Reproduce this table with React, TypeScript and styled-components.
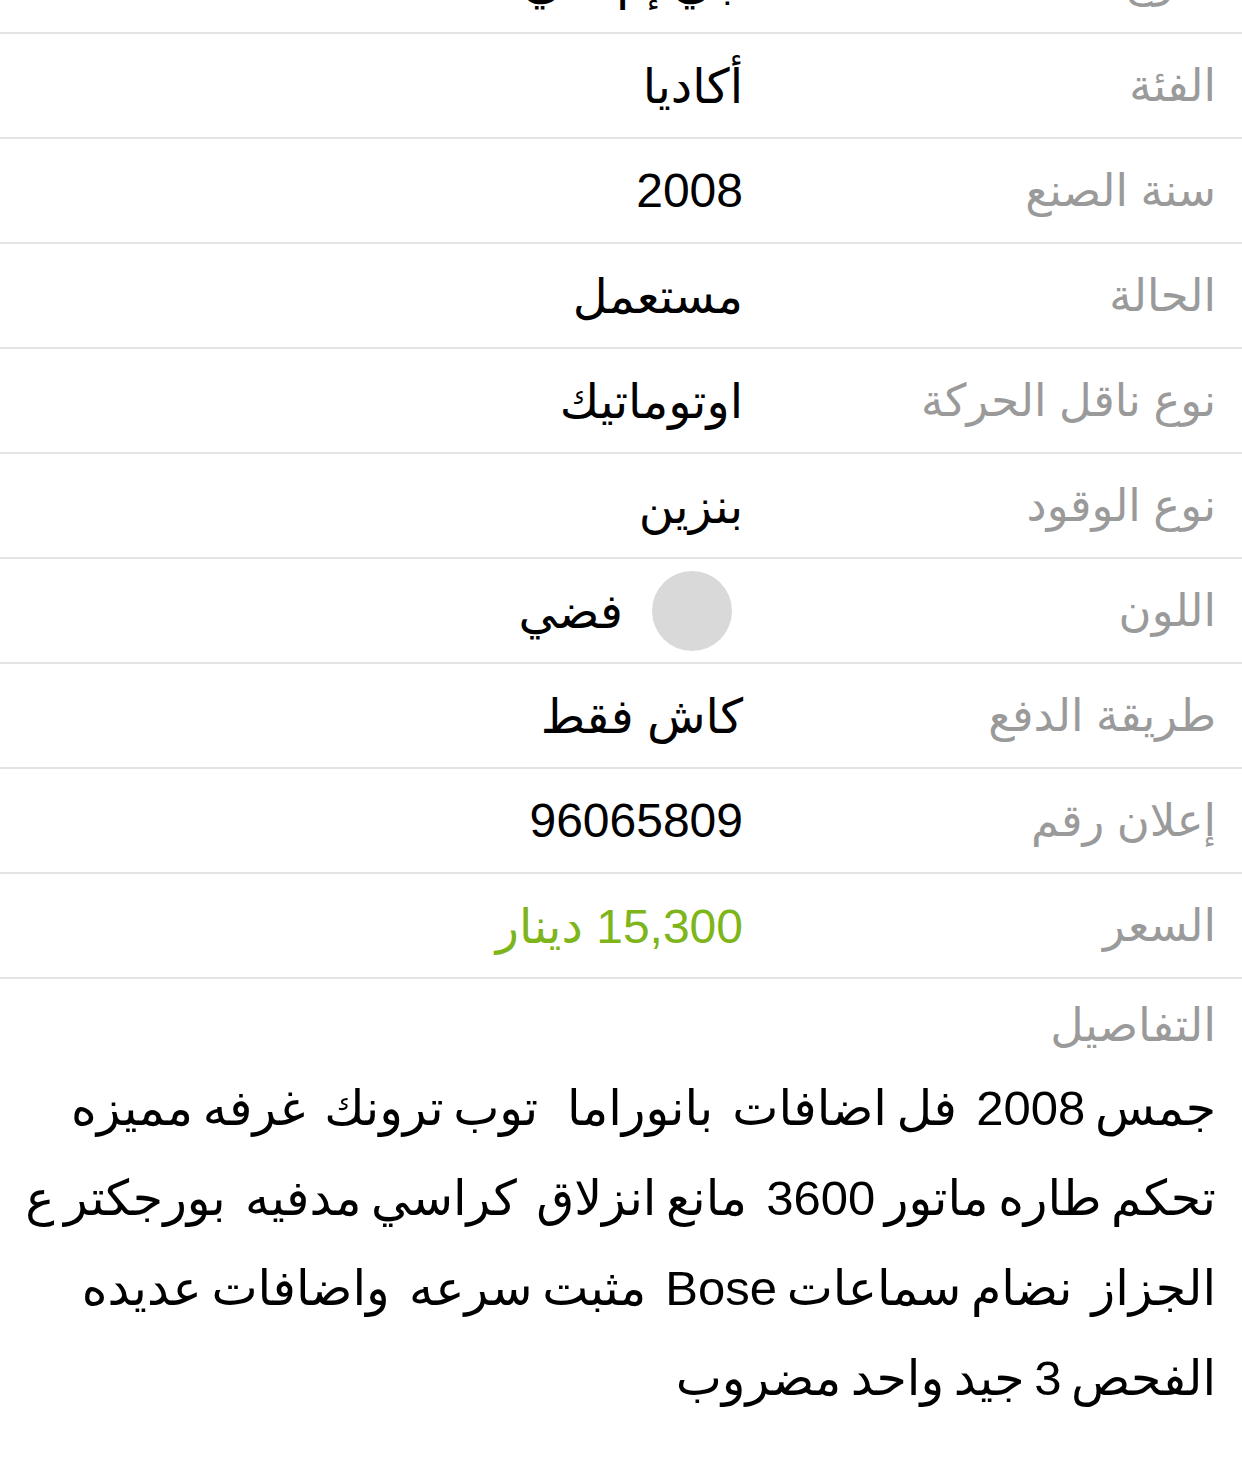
import React from "react";
import styled, { createGlobalStyle } from "styled-components";

const Global = createGlobalStyle`
  html, body { margin: 0; padding: 0; background: #ffffff; }
  body { font-family: "Liberation Sans", "DejaVu Sans", sans-serif; overflow: hidden; }
`;

const Page = styled.div`
  width: 1242px;
  height: 1460px;
  overflow: hidden;
  background: #ffffff;
  direction: rtl;
`;

const List = styled.div`
  margin-top: -71px;
  display: flex;
  flex-direction: column;
`;

const Row = styled.div`
  box-sizing: border-box;
  height: 105px;
  border-bottom: 2px solid #e4e4e4;
  display: grid;
  grid-template-columns: 473px 1fr;
  align-items: center;
  padding-right: 26px;
`;

const Label = styled.div`
  font-size: 45px;
  color: #9a9a9a;
  text-align: right;
  white-space: nowrap;
`;

const Value = styled.div<{ $accent?: boolean }>`
  font-size: 48px;
  color: ${(p) => (p.$accent ? "#7db51b" : "#000000")};
  display: flex;
  align-items: center;
  gap: 29px;
  white-space: nowrap;
`;

const Swatch = styled.span<{ $color: string }>`
  width: 80px;
  height: 80px;
  margin-right: 11px;
  border-radius: 50%;
  background: ${(p) => p.$color};
  flex: none;
`;

const Details = styled.div`
  padding: 16px 26px 0 26px;
  display: flex;
  flex-direction: column;
`;

const DetailsTitle = styled.div`
  font-size: 46px;
  line-height: 60px;
  color: #9a9a9a;
  margin-bottom: 8px;
`;

const DetailLine = styled.div`
  font-size: 49px;
  line-height: 90px;
  color: #000000;
  white-space: pre;
  word-spacing: -4px;
`;

type Item = { label: string; value: string; accent?: boolean; swatch?: string };

const items: Item[] = [
  { label: "النوع", value: "جي إم سي" },
  { label: "الفئة", value: "أكاديا" },
  { label: "سنة الصنع", value: "2008" },
  { label: "الحالة", value: "مستعمل" },
  { label: "نوع ناقل الحركة", value: "اوتوماتيك" },
  { label: "نوع الوقود", value: "بنزين" },
  { label: "اللون", value: "فضي", swatch: "#d9d9d9" },
  { label: "طريقة الدفع", value: "كاش فقط" },
  { label: "إعلان رقم", value: "96065809" },
  { label: "السعر", value: "15,300 دينار", accent: true },
];

const lines = [
  "جمس 2008  فل اضافات  بانوراما   توب ترونك  غرفه مميزه",
  "تحكم طاره ماتور 3600  مانع انزلاق  كراسي مدفيه  بورجكتر ع",
  "الجزاز  نضام سماعات Bose  مثبت سرعه  واضافات عديده",
  "الفحص 3 جيد واحد مضروب",
];

export default function App() {
  return (
    <Page>
      <Global />
      <List>
        {items.map((it) => (
          <Row key={it.label}>
            <Label>{it.label}</Label>
            <Value $accent={it.accent}>
              {it.swatch && <Swatch $color={it.swatch} />}
              <span>{it.value}</span>
            </Value>
          </Row>
        ))}
      </List>
      <Details>
        <DetailsTitle>التفاصيل</DetailsTitle>
        {lines.map((l) => (
          <DetailLine key={l}>{l}</DetailLine>
        ))}
      </Details>
    </Page>
  );
}
